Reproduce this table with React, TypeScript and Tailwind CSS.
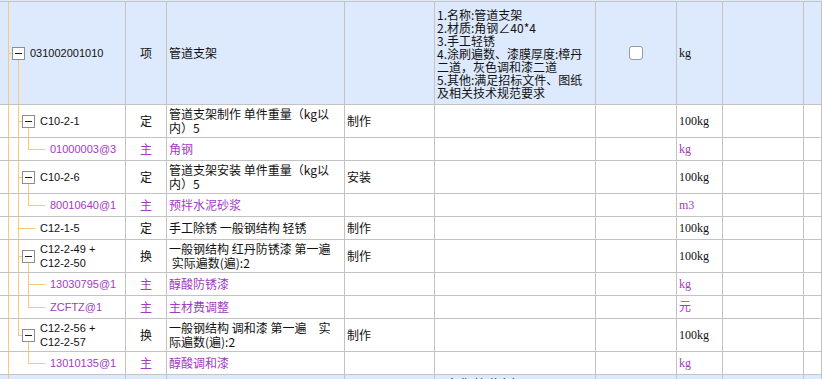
import React from "react";

type Seg = "full" | "from" | "to";
type Tree = { level: 0 | 1 | 2 | 3; box?: boolean; l18?: Seg; l28?: Seg };
type Row = {
  h: string;
  tree: Tree;
  code?: string[];
  type?: string;
  name?: string[];
  work?: string;
  feat?: string[];
  check?: boolean;
  unit?: string;
  blue?: boolean;
  purple?: boolean;
  first?: boolean;
};

const cols =
  "grid grid-cols-[126px_41px_178px_90px_161px_81px_46px_81px_1fr]";
const cell = "border-r border-b border-[#c3c3c3] min-w-0";
const ln = "absolute bg-[#fcc878]";

const rows: Row[] = [
  {
    h: "h-[104px]",
    first: true,
    blue: true,
    tree: { level: 1, box: true, l18: "from" },
    code: ["031002001010"],
    type: "项",
    name: ["管道支架"],
    feat: [
      "1.名称:管道支架",
      "2.材质:角钢∠40*4",
      "3.手工轻锈",
      "4.涂刷遍数、漆膜厚度:樟丹",
      "二道，灰色调和漆二道",
      "5.其他:满足招标文件、图纸",
      "及相关技术规范要求",
    ],
    check: true,
    unit: "kg",
  },
  {
    h: "h-[33px]",
    tree: { level: 2, box: true, l18: "full", l28: "from" },
    code: ["C10-2-1"],
    type: "定",
    name: ["管道支架制作 单件重量（kg以", "内）5"],
    work: "制作",
    unit: "100kg",
  },
  {
    h: "h-[23px]",
    purple: true,
    tree: { level: 3, l18: "full", l28: "to" },
    code: ["01000003@3"],
    type: "主",
    name: ["角钢"],
    unit: "kg",
  },
  {
    h: "h-[33px]",
    tree: { level: 2, box: true, l18: "full", l28: "from" },
    code: ["C10-2-6"],
    type: "定",
    name: ["管道支架安装 单件重量（kg以", "内）5"],
    work: "安装",
    unit: "100kg",
  },
  {
    h: "h-[23px]",
    purple: true,
    tree: { level: 3, l18: "full", l28: "to" },
    code: ["80010640@1"],
    type: "主",
    name: ["预拌水泥砂浆"],
    unit: "m3",
  },
  {
    h: "h-[23px]",
    tree: { level: 2, l18: "full" },
    code: ["C12-1-5"],
    type: "定",
    name: ["手工除锈 一般钢结构 轻锈"],
    work: "制作",
    unit: "100kg",
  },
  {
    h: "h-[33px]",
    tree: { level: 2, box: true, l18: "full", l28: "from" },
    code: ["C12-2-49 +", "C12-2-50"],
    type: "换",
    name: ["一般钢结构 红丹防锈漆 第一遍", "\u00a0实际遍数(遍):2"],
    work: "制作",
    unit: "100kg",
  },
  {
    h: "h-[23px]",
    purple: true,
    tree: { level: 3, l18: "full", l28: "full" },
    code: ["13030795@1"],
    type: "主",
    name: ["醇酸防锈漆"],
    unit: "kg",
  },
  {
    h: "h-[23px]",
    purple: true,
    tree: { level: 3, l18: "full", l28: "to" },
    code: ["ZCFTZ@1"],
    type: "主",
    name: ["主材费调整"],
    unit: "元",
  },
  {
    h: "h-[33px]",
    tree: { level: 2, box: true, l18: "to", l28: "from" },
    code: ["C12-2-56 +", "C12-2-57"],
    type: "换",
    name: ["一般钢结构 调和漆 第一遍\u3000实", "际遍数(遍):2"],
    work: "制作",
    unit: "100kg",
  },
  {
    h: "h-[23px]",
    purple: true,
    tree: { level: 3, l28: "to" },
    code: ["13010135@1"],
    type: "主",
    name: ["醇酸调和漆"],
    unit: "kg",
  },
];

function Vert({ x, seg }: { x: 18 | 28; seg?: Seg }) {
  if (!seg) return null;
  const left = x === 18 ? "left-[18px]" : "left-[28px]";
  if (seg === "full") return <div className={`${ln} ${left} top-0 bottom-0 w-px`} />;
  if (seg === "from")
    return <div className={`${ln} ${left} top-[calc(50%+7px)] bottom-0 w-px`} />;
  return <div className={`${ln} ${left} top-0 h-1/2 w-px`} />;
}

function Box({ left }: { left: string }) {
  return (
    <div
      className={`absolute ${left} top-[calc(50%-6px)] size-[13px] border border-[#8e8e8e] bg-white flex items-center justify-center`}
    >
      <div className="w-[7px] h-px bg-[#222]" />
    </div>
  );
}

function TreeCell({ t, code, extra }: { t: Tree; code?: string[]; extra: string }) {
  const pad =
    t.level === 1 ? "pl-[30px]" : t.level === 2 ? "pl-[40px]" : "pl-[50px]";
  return (
    <div className={`${cell} ${extra} relative flex items-center ${pad}`}>
      <div className={`${ln} left-[8px] top-0 bottom-0 w-px`} />
      <Vert x={18} seg={t.l18} />
      <Vert x={28} seg={t.l28} />
      {t.level === 1 && (
        <>
          <div className={`${ln} left-[8px] top-1/2 w-[4px] h-px`} />
          <Box left="left-[12px]" />
        </>
      )}
      {t.level === 2 &&
        (t.box ? (
          <>
            <div className={`${ln} left-[18px] top-1/2 w-[4px] h-px`} />
            <Box left="left-[22px]" />
          </>
        ) : (
          <div className={`${ln} left-[18px] top-1/2 w-[17px] h-px`} />
        ))}
      {t.level === 3 && <div className={`${ln} left-[28px] top-1/2 w-[17px] h-px`} />}
      {code && (
        <div className="relative text-[11px] leading-[14px] font-['Liberation_Sans','Noto_Sans_CJK_SC',sans-serif] whitespace-nowrap">
          {code.map((c) => (
            <div key={c}>{c}</div>
          ))}
        </div>
      )}
    </div>
  );
}

function Lines({ lines, lead }: { lines?: string[]; lead: string }) {
  if (!lines) return null;
  return (
    <div className={`whitespace-nowrap ${lead}`}>
      {lines.map((l, i) => (
        <div key={i}>{l}</div>
      ))}
    </div>
  );
}

function TableRow({ r }: { r: Row }) {
  const top = r.first ? "border-t" : "";
  const bg = r.blue ? "bg-[#dde9fc]" : "bg-white";
  const color = r.purple ? "text-[#a03cbf]" : "text-[#111]";
  return (
    <div className={`${cols} ${r.h} ${bg} ${color}`}>
      <TreeCell t={r.tree} code={r.code} extra={top} />
      <div className={`${cell} ${top} flex items-center justify-center`}>{r.type}</div>
      <div className={`${cell} ${top} flex items-center pl-[2px]`}>
        <Lines lines={r.name} lead="leading-[14px]" />
      </div>
      <div className={`${cell} ${top} flex items-center pl-[2px]`}>{r.work}</div>
      <div className={`${cell} ${top} flex items-center pl-[2px]`}>
        <Lines lines={r.feat} lead="leading-[13px]" />
      </div>
      <div className={`${cell} ${top} flex items-center justify-center`}>
        {r.check && (
          <div className="size-[14px] rounded-[3px] border border-[#9a9a9a] bg-white" />
        )}
      </div>
      <div
        className={`${cell} ${top} flex items-center pl-[2px] font-['Liberation_Serif','Noto_Sans_CJK_SC',serif] text-[12px]`}
      >
        {r.unit}
      </div>
      <div className={`${cell} ${top}`} />
      <div className={`${cell} ${top}`} />
    </div>
  );
}

export default function App() {
  return (
    <div className="w-[822px] h-[379px] overflow-hidden bg-white text-[12px] font-['Noto_Sans_CJK_SC','Liberation_Sans',sans-serif]">
      <div className="h-px bg-[#dde9fc]" />
      {rows.map((r, i) => (
        <TableRow key={i} r={r} />
      ))}
      <div className={`${cols} h-[40px] bg-[#dde9fc] text-[#111]`}>
        <div className={`${cell} relative`}>
          <div className={`${ln} left-[8px] top-0 bottom-0 w-px`} />
        </div>
        <div className={cell} />
        <div className={cell} />
        <div className={cell} />
        <div className={`${cell} pl-[2px] pt-[2px] leading-[13px] whitespace-nowrap`}>
          1.名称:管道支架
        </div>
        <div className={cell} />
        <div className={cell} />
        <div className={cell} />
        <div className={cell} />
      </div>
    </div>
  );
}
